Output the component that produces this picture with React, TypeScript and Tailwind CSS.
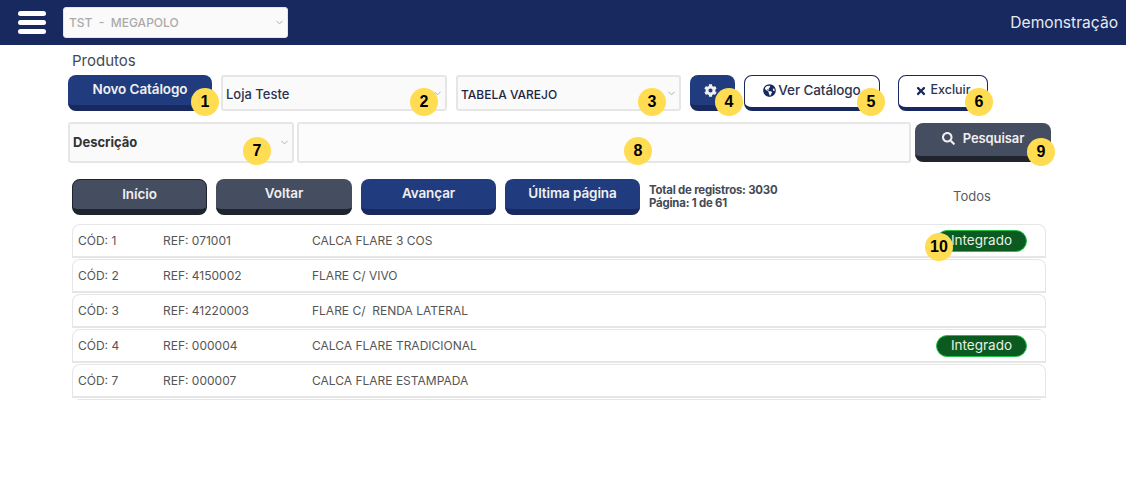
import { ChevronDown } from "lucide-react";
import { FaCog, FaGlobeAmericas, FaSearch, FaTimes } from "react-icons/fa";

const font = "font-['Inter','Noto_Sans',sans-serif]";

const rows = [
  { cod: "CÓD: 1", ref: "REF: 071001", nome: "CALCA FLARE 3 COS", integrado: true },
  { cod: "CÓD: 2", ref: "REF: 4150002", nome: "FLARE C/ VIVO", integrado: false },
  { cod: "CÓD: 3", ref: "REF: 41220003", nome: "FLARE C/  RENDA LATERAL", integrado: false },
  { cod: "CÓD: 4", ref: "REF: 000004", nome: "CALCA FLARE TRADICIONAL", integrado: true },
  { cod: "CÓD: 7", ref: "REF: 000007", nome: "CALCA FLARE ESTAMPADA", integrado: false },
];

// numbered yellow marker laid over the screenshot
function Marker({ n, className }: { n: number; className: string }) {
  return (
    <span
      className={`absolute flex h-7 w-7 items-center justify-center rounded-full bg-[#ffdc52] font-['Liberation_Sans',sans-serif] text-[16px] font-bold text-black ${className}`}
    >
      {n}
    </span>
  );
}

function Select({ label, className, textClass }: { label: string; className: string; textClass: string }) {
  return (
    <div
      className={`flex items-center justify-between rounded-[3px] border-2 border-[#e6e6e6] bg-[#fafafa] pl-[3px] pr-[2px] ${className}`}
    >
      <span className={`whitespace-pre ${textClass}`}>{label}</span>
      <ChevronDown className="h-[11px] w-[11px] text-[#aaaaaa]" />
    </div>
  );
}

function Btn({ label, className }: { label: string; className: string }) {
  return (
    <button
      className={`flex h-9 items-center justify-center rounded-lg border-b-[6px] pb-[2px] text-[13.5px] font-semibold tracking-[-0.1px] text-[#f0f0f0] ${className}`}
    >
      {label}
    </button>
  );
}

export default function App() {
  return (
    <div className={`relative h-[482px] w-[1126px] overflow-hidden bg-white ${font}`}>
      {/* Header */}
      <header className="flex h-[45px] items-center justify-between bg-[#17295e] pl-[18px] pr-2">
        <div className="flex items-center gap-[17px]">
          <div className="flex w-[28px] flex-col gap-[4px]">
            <span className="h-[5px] rounded-sm bg-white" />
            <span className="h-[5px] rounded-sm bg-white" />
            <span className="h-[5px] rounded-sm bg-white" />
          </div>
          <div className="flex h-[31px] w-[225px] items-center justify-between rounded-[3px] border border-[#e6e6e6] bg-[#fafafa] pl-[5px] pr-[2px]">
            <span className="whitespace-pre text-xs font-medium text-[#aaaaaa]">TST  -  MEGAPOLO</span>
            <ChevronDown className="h-[11px] w-[11px] text-[#aaaaaa]" />
          </div>
        </div>
        <span className="text-[15.6px] text-[#e8e8ee]">Demonstração</span>
      </header>

      <main className="pl-[68px]">
        <h1 className="ml-[4px] mt-[6px] h-[24px] text-[15px] leading-[19px] text-[#444a55]">Produtos</h1>

        {/* Linha 1 */}
        <div className="flex items-center">
          <Btn label="Novo Catálogo" className="w-[144px] border-[#17295e] bg-[#213c7e]" />
          <Select
            label="Loja Teste"
            className="ml-[9px] h-9 w-[226px]"
            textClass="pt-[3px] text-[13px] font-medium text-[#2c3350]"
          />
          <Select
            label="TABELA VAREJO"
            className="ml-[9px] h-9 w-[225px]"
            textClass="pt-[3px] text-xs font-medium text-[#1c2445]"
          />
          <button className="ml-[9px] flex h-9 w-[45px] items-center justify-center rounded-lg border-b-[6px] border-[#17295e] bg-[#213c7e] pr-[4px]">
            <FaCog className="h-[13px] w-[13px] text-[#f0f0f0]" />
          </button>
          <button className="ml-[9px] flex h-9 w-[136px] items-center justify-center gap-[2px] rounded-lg border border-b-[4px] border-[#17295e] bg-white pb-[2px] text-[13.5px] font-medium tracking-[-0.1px] text-[#2c3350]">
            <FaGlobeAmericas className="h-[13px] w-[13px] text-[#17295e]" />
            Ver Catálogo
          </button>
          <button className="ml-[18px] flex h-9 w-[90px] items-center justify-center gap-[3px] rounded-lg border border-b-[4px] border-[#17295e] bg-white pb-[2px] text-[12.5px] font-medium text-[#2c3350]">
            <FaTimes className="h-3 w-3 text-[#17295e]" />
            Excluir
          </button>
        </div>

        {/* Linha 2 */}
        <div className="mt-[11px] flex items-center">
          <Select
            label="Descrição"
            className="h-[41px] w-[226px]"
            textClass="text-[13px] font-bold text-[#333333]"
          />
          <div className="ml-[3px] h-[41px] w-[614px] rounded-[3px] border-2 border-[#e6e6e6] bg-[#fcfcfc]" />
          <button className="ml-[4px] flex h-[39px] w-[136px] items-center justify-center gap-[8px] rounded-lg border-b-[6px] border-[#20242f] bg-[#454d60] pb-[2px] text-[13px] font-semibold tracking-[-0.1px] text-[#f0f0f0]">
            <FaSearch className="h-[13px] w-[13px]" />
            Pesquisar
          </button>
        </div>

        {/* Paginação */}
        <div className="ml-[4px] mt-[16px] flex items-center">
          <Btn label="Início" className="w-[135px] border-x border-t border-[#20242f] bg-[#454d60] pt-[2px]" />
          <Btn label="Voltar" className="ml-[9px] w-[136px] border-[#20242f] bg-[#454d60]" />
          <Btn label="Avançar" className="ml-[9px] w-[135px] border-[#17295e] bg-[#213c7e]" />
          <Btn label="Última página" className="ml-[9px] w-[135px] border-[#17295e] bg-[#213c7e]" />
          <div className="ml-[9px] w-[174px] text-[11.4px] font-bold leading-[13px] tracking-[-0.2px] text-[#444a55]">
            <div>Total de registros: 3030</div>
            <div>Página: 1 de 61</div>
          </div>
          <span className="ml-[130px] text-[13px] text-[#555b66]">Todos</span>
        </div>

        {/* Lista */}
        <div className="ml-[4px] mt-[9px] flex h-[176px] w-[974px] flex-col gap-px overflow-hidden">
          {rows.map((r) => (
            <div
              key={r.cod}
              className="flex h-[34px] shrink-0 items-center rounded-t-lg border-x border-t border-b-2 border-[#e6e6e6] bg-white pl-[5px] text-xs text-[#555555]"
            >
              <span className="w-[85px]">{r.cod}</span>
              <span className="w-[149px]">{r.ref}</span>
              <span className="whitespace-pre">{r.nome}</span>
              {r.integrado && (
                <span className="ml-auto mr-[18px] flex h-[22px] w-[91px] items-center justify-center rounded-full border border-[#22c04a] bg-[#0b5a20] text-[13.5px] text-[#e8f0e8]">
                  Integrado
                </span>
              )}
            </div>
          ))}
          <div className="h-[34px] shrink-0 rounded-t-lg border-x border-t border-[#e6e6e6]" />
        </div>
      </main>

      <Marker n={1} className="left-[191px] top-[88px]" />
      <Marker n={2} className="left-[410px] top-[88px]" />
      <Marker n={3} className="left-[638px] top-[88px]" />
      <Marker n={4} className="left-[715px] top-[88px]" />
      <Marker n={5} className="left-[857px] top-[88px]" />
      <Marker n={6} className="left-[965px] top-[88px]" />
      <Marker n={7} className="left-[243px] top-[137px]" />
      <Marker n={8} className="left-[624px] top-[137px]" />
      <Marker n={9} className="left-[1027px] top-[138px]" />
      <Marker n={10} className="left-[925px] top-[233px]" />
    </div>
  );
}
